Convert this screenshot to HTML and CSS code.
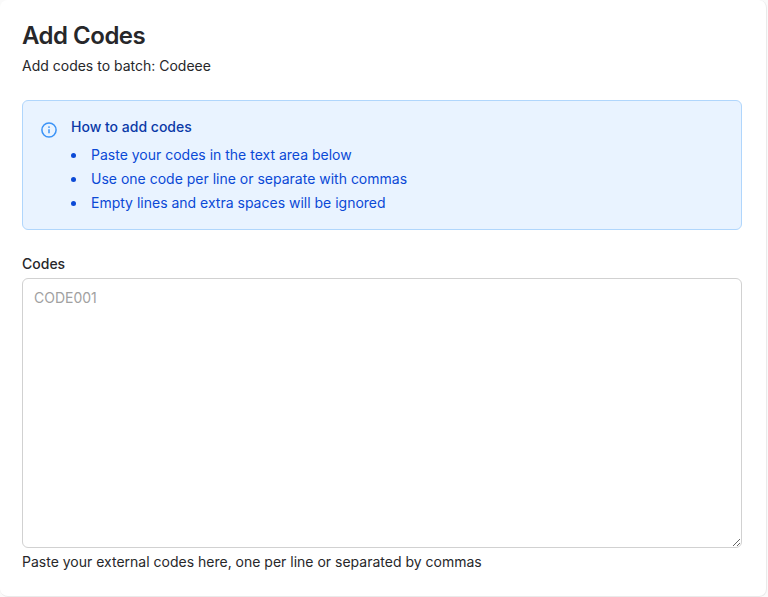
FILE: index.html
```html
<!DOCTYPE html>
<html lang="en">
<head>
  <meta charset="UTF-8">
  <title>Add Codes</title>
  <link rel="stylesheet" href="styles.css">
</head>
<body>

  <div class="card">
    <h1>Add Codes</h1>
    <p class="subtitle">Add codes to batch: Codeee</p>

    <div class="notice">
      <svg class="notice-icon" width="16" height="16" viewBox="0 0 16 16" fill="none" aria-hidden="true">
        <circle cx="8" cy="8" r="7.1" stroke="#3b93f7" stroke-width="1.5"/>
        <circle cx="8" cy="5.1" r="0.9" fill="#3b93f7"/>
        <path d="M8 7.2v4" stroke="#3b93f7" stroke-width="1.5"/>
      </svg>
      <div class="notice-body">
        <h2>How to add codes</h2>
        <ul>
          <li>Paste your codes in the text area below</li>
          <li>Use one code per line or separate with commas</li>
          <li>Empty lines and extra spaces will be ignored</li>
        </ul>
      </div>
    </div>

    <label class="field-label" for="codes">Codes</label>
    <textarea id="codes" placeholder="CODE001"></textarea>
    <p class="help">Paste your external codes here, one per line or separated by commas</p>
  </div>

</body>
</html>
```

FILE: styles.css
```css
html, body {
  height: 100%;
}

body {
  margin: 0;
  font-family: Inter, "Noto Sans", sans-serif;
  background-color: #fafafa;
  color: #27272a;
  overflow: hidden;
}

.card {
  box-sizing: border-box;
  width: 767px;
  height: 597px;
  padding: 21px 24px 0 22px;
  background-color: #fff;
  border-right: 1px solid #eaeaea;
  border-bottom: 1px solid #eaeaea;
  border-radius: 8px;
}

h1 {
  margin: 0;
  font-size: 24px;
  line-height: 30px;
  font-weight: 600;
  letter-spacing: -0.5px;
  color: #27272a;
}

.subtitle {
  margin: 5px 0 0;
  font-size: 14px;
  line-height: 20px;
}

.notice {
  display: flex;
  gap: 14px;
  box-sizing: border-box;
  height: 130px;
  margin-top: 24px;
  padding: 17px 18px;
  background-color: #e9f3ff;
  border: 1px solid #b0d6fc;
  border-radius: 6px;
  color: #0b49d6;
  font-size: 14px;
}

.notice-icon {
  flex: none;
  margin-top: 4px;
}

.notice h2 {
  margin: 0;
  font-size: 14px;
  line-height: 18px;
  font-weight: 500;
  color: #0b3aa8;
}

.notice ul {
  margin: 7px 0 0;
  padding: 0;
  list-style: none;
}

.notice li {
  display: flex;
  align-items: center;
  gap: 15px;
  line-height: 24px;
}

.notice li::before {
  content: "";
  flex: none;
  width: 5px;
  height: 5px;
  border-radius: 50%;
  background-color: #0b49d6;
}

.field-label {
  display: block;
  margin-top: 24px;
  font-size: 14px;
  line-height: 20px;
  font-weight: 500;
}

textarea {
  display: block;
  box-sizing: border-box;
  width: 720px;
  height: 270px;
  margin-top: 4px;
  padding: 9px 11px;
  border: 1px solid #d1d1d1;
  border-radius: 6px;
  font-family: inherit;
  font-size: 14px;
  line-height: 20px;
  color: #27272a;
  background-color: #fff;
}

textarea::placeholder {
  color: #a1a1a1;
}

.help {
  margin: 4px 0 0;
  font-size: 14px;
  line-height: 20px;
}
```
